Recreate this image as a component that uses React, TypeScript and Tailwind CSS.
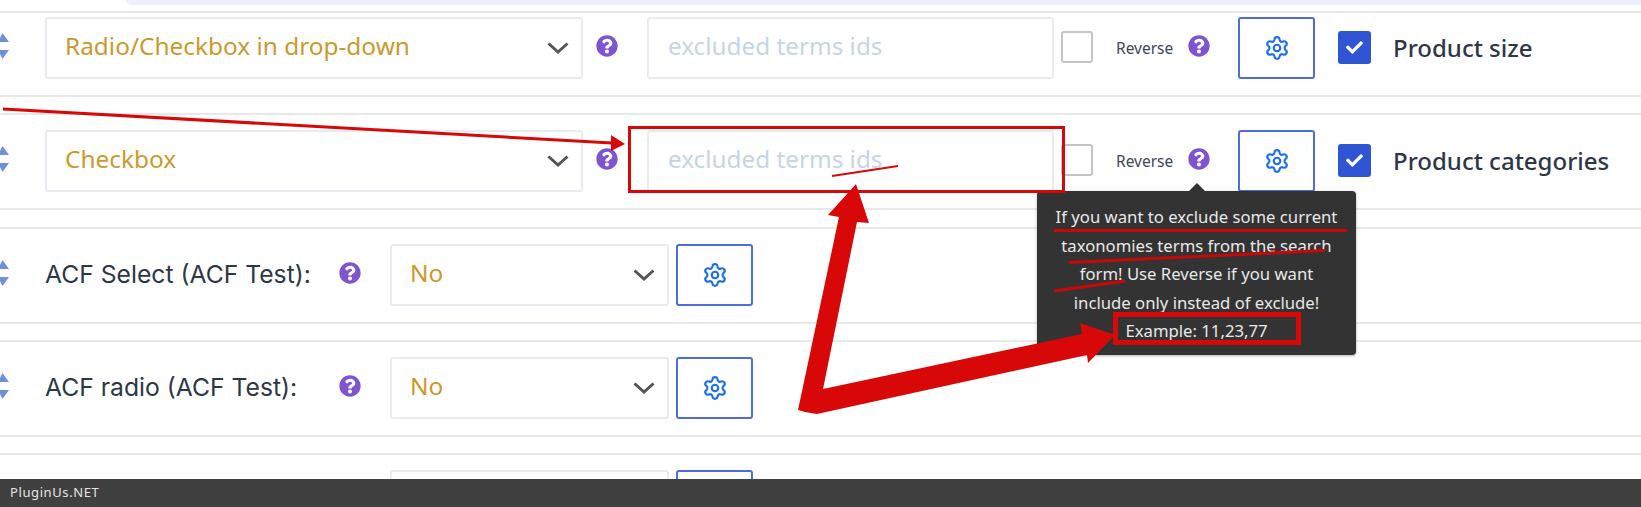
import { Settings } from 'lucide-react'
import { FaCheck, FaQuestionCircle } from 'react-icons/fa'

const font = { fontFamily: '"Noto Sans", sans-serif' }

function SortHandle() {
  return (
    <svg width="9" height="26" viewBox="0 0 9 26" className="mt-[16px] shrink-0 self-start">
      <path d="M-2 9 L2.5 0 L9 9 Z" fill="#6f8fdc" />
      <path d="M-2 17 L2.5 26 L9 17 Z" fill="#6f8fdc" />
    </svg>
  )
}

function Help({ className = '' }: { className?: string }) {
  return <FaQuestionCircle size={22} className={`shrink-0 text-[#7f55cf] ${className}`} />
}

function Select({ value, className }: { value: string; className: string }) {
  return (
    <div className={`flex h-[62px] shrink-0 items-center justify-between rounded-[3px] border-2 border-[#e8ecf1] pl-[18px] text-[24.4px] text-[#c99a2e] ${className}`}>
      <span className="mb-[3px]">{value}</span>
      <svg width="22" height="12" viewBox="0 0 22 12" className="mr-[12px]">
        <path d="M1.5 1.5 L11 10 L20.5 1.5" fill="none" stroke="#555" strokeWidth="3" />
      </svg>
    </div>
  )
}

function GearButton({ className }: { className: string }) {
  return (
    <button className={`flex h-[62px] w-[77px] shrink-0 items-center justify-center rounded-[3px] border-2 border-[#4a6fdc] ${className}`}>
      <Settings size={26} strokeWidth={2} className="text-[#1e6fe8]" />
    </button>
  )
}

function TaxonomyRow({ type, label, first }: { type: string; label: string; first?: boolean }) {
  return (
    <div className={`flex shrink-0 items-start border-y-2 border-[#e8e8e8] ${first ? 'mb-[16px] h-[86px] pt-[4px]' : 'mb-[17px] h-[97px] pt-[15px]'}`}>
      <SortHandle />
      <Select value={type} className="ml-[36px] w-[538px]" />
      <Help className="ml-[13px] mt-[18px]" />
      <div className="ml-[29px] flex h-[62px] w-[407px] shrink-0 items-center rounded-[3px] border-2 border-[#e8ecf1] pl-[19px] text-[24.3px] text-[#c3d5e8]">
        <span className="mb-[3px]">excluded terms ids</span>
      </div>
      <div className="ml-[7px] mt-[14px] h-[32px] w-[32px] shrink-0 rounded-[3px] border-2 border-[#c4c4c4]" />
      <span className="ml-[23px] mt-[20px] w-[58px] shrink-0 text-[15.5px] text-[#3c4858]">Reverse</span>
      <Help className="ml-[14px] mt-[18px]" />
      <GearButton className="ml-[28px]" />
      <div className="ml-[23px] mt-[14px] flex h-[33px] w-[33px] shrink-0 items-center justify-center rounded-[3px] bg-[#2f55d4]">
        <FaCheck size={17} className="text-white" />
      </div>
      <span className="ml-[22px] mt-[13px] text-[24px] font-medium text-[#2d3748]">{label}</span>
    </div>
  )
}

function AcfRow({ label }: { label?: string }) {
  return (
    <div className="mb-[16px] flex h-[97px] shrink-0 items-start border-y-2 border-[#e8e8e8] pt-[15px]">
      <SortHandle />
      <span className="ml-[36px] mt-[12px] w-[294px] shrink-0 text-[24.7px] text-[#2d3748]" style={{ fontFamily: 'Inter, sans-serif' }}>
        {label}
      </span>
      <Help className="mt-[18px]" />
      <Select value={label ? 'No' : ''} className="ml-[29px] w-[279px]" />
      <GearButton className="ml-[7px]" />
    </div>
  )
}

export default function App() {
  return (
    <div className="relative flex h-[507px] w-[1641px] flex-col overflow-hidden bg-white" style={font}>
      <div className="min-h-0 flex-1 overflow-hidden">
        <div className="ml-[126px] h-[5px] rounded-bl-[12px] bg-[#ebf0f9]" />
        <div className="mt-[6px] flex flex-col">
          <TaxonomyRow first type="Radio/Checkbox in drop-down" label="Product size" />
          <TaxonomyRow type="Checkbox" label="Product categories" />
          <AcfRow label="ACF Select (ACF Test):" />
          <AcfRow label="ACF radio (ACF Test):" />
          <AcfRow />
        </div>
      </div>
      <footer className="flex h-[28px] shrink-0 items-center bg-[#404040] pl-[10px] text-[13px] tracking-[0.6px] text-[#e4e4e4]">
        PluginUs.NET
      </footer>

      {/* tooltip over the second row */}
      <div className="absolute left-[1037px] top-[191px] h-[164px] w-[319px] rounded-[4px] bg-[#333] pt-[12px] text-center text-[16.7px] leading-[28.5px] text-[#e8e8e8] shadow-[0_1px_3px_rgba(0,0,0,0.3)]">
        <div className="absolute left-[152px] top-[-8px] size-0 border-x-[8px] border-b-[8px] border-x-transparent border-b-[#333]" />
        If you want to exclude some current
        <br />
        taxonomies terms from the search
        <br />
        form! Use Reverse if you want
        <br />
        include only instead of exclude!
        <br />
        Example: 11,23,77
      </div>

      {/* red annotations drawn on top of the screenshot */}
      <svg width="1641" height="507" viewBox="0 0 1641 507" className="pointer-events-none absolute left-0 top-0">
        <rect x="629.5" y="127.5" width="434" height="64" fill="none" stroke="#d80808" strokeWidth="3" />
        <path d="M3 109 L612 143" stroke="#d80808" strokeWidth="3" />
        <path d="M611 135 L625 144 L611 151 Z" fill="#d80808" />
        <path d="M832 176 L898 166" stroke="#d80808" strokeWidth="2" />
        <path
          d="M798 410 L839 217 L828 215 L856 184 L869 223 L857 222 L823 389 L1082 334 L1080 323 L1115 335 L1088 363 L1087 355 L817 414 L805 412 Z"
          fill="#d80808"
        />
        <path d="M1054 230.5 L1347 230.5" stroke="#c80808" strokeWidth="3" />
        <path d="M1069 262.5 L1325 250.5" stroke="#c80808" strokeWidth="3" />
        <path d="M1054 291 L1125 281" stroke="#c80808" strokeWidth="3" />
        <rect x="1115.5" y="314.5" width="183" height="28" fill="none" stroke="#d80808" strokeWidth="5" />
      </svg>
    </div>
  )
}
